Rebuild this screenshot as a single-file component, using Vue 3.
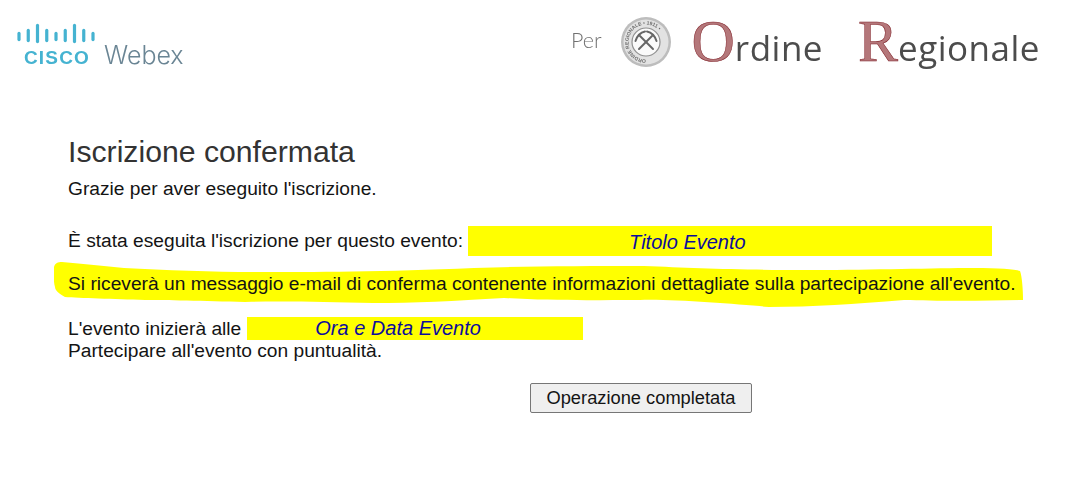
<template>
  <div class="page">
    <header class="top">
      <div class="cisco">
        <div class="cisco-mark">
          <svg class="bars" width="78" height="22" viewBox="0 0 78 22">
            <line
              v-for="(bar, index) in bars"
              :key="index"
              :x1="bar.x"
              :x2="bar.x"
              :y1="bar.top"
              :y2="bar.bottom"
            />
          </svg>
          <span class="cisco-word">CISCO</span>
        </div>
        <span class="webex">Webex</span>
      </div>

      <div class="partner">
        <span class="per">Per</span>
        <svg class="seal" width="52" height="52" viewBox="0 0 52 52">
          <circle cx="26" cy="26" r="25" fill="#bdbdbd" />
          <circle cx="26" cy="26" r="22.5" fill="#e2e2e2" />
          <circle cx="26" cy="26" r="14" fill="#fafafa" stroke="#8f8f8f" stroke-width="1.2" />
          <path id="sealRing" d="M26 43.5a17.5 17.5 0 1 1 .01 0" fill="none" />
          <text class="seal-text">
            <textPath href="#sealRing">ORDINE REGIONALE • 1911 •</textPath>
          </text>
          <g fill="none" stroke="#666" stroke-linecap="round">
            <path d="M19 33L32 20" stroke-width="2" />
            <path d="M33 33L20 20" stroke-width="2" />
            <path d="M27 15.5Q34 17 36.5 25" stroke-width="2" />
            <path d="M15.5 25Q18 17 25 15.5" stroke-width="2" />
          </g>
        </svg>
        <span class="org"><span class="cap">O</span>rdine</span>
        <span class="org"><span class="cap">R</span>egionale</span>
      </div>
    </header>

    <main class="content">
      <h1>Iscrizione confermata</h1>
      <p class="thanks">Grazie per aver eseguito l'iscrizione.</p>

      <div class="event-row">
        <span>È stata eseguita l'iscrizione per questo evento:</span>
        <span class="field field-title">Titolo Evento</span>
      </div>

      <div class="notice">
        <svg class="brush" width="970" height="50" viewBox="0 0 970 50">
          <path d="M0 7C1 3 4 2 8 2C30 4 50 6 70 8C110 10 160 12 200 12C260 12 330 12 420 8C480 6 530 6 590 6C640 8 680 10 760 10C820 10 880 8 920 8C945 8 960 9 966 11C968 16 969 30 969 40C930 41 880 41 850 40C800 44 760 47 715 47C680 44 620 39 586 40C540 40 500 41 450 38C400 41 360 43 319 43C270 42 230 41 191 42C150 41 110 40 91 40C60 39 25 38 11 37C5 34 1 30 1 27C-1 20 0 12 0 7Z" />
        </svg>
        <p>Si riceverà un messaggio e-mail di conferma contenente informazioni dettagliate sulla partecipazione all'evento.</p>
      </div>

      <div class="time-block">
        <div class="time-row">
          <span>L'evento inizierà alle</span>
          <span class="field field-time">Ora e Data Evento</span>
        </div>
        <p>Partecipare all'evento con puntualità.</p>
      </div>

      <div class="actions">
        <button type="button">Operazione completata</button>
      </div>
    </main>
  </div>
</template>

<script setup>
// Cisco bars: short, mid, tall, mirrored around the middle one
const sizes = {
  short: [10.4, 16.6],
  mid: [7.4, 17.6],
  tall: [2.4, 18.6]
}
const order = ['short', 'mid', 'tall', 'mid', 'short', 'mid', 'tall', 'mid', 'short']
const bars = order.map((name, i) => ({
  x: 2 + i * 9.25,
  top: sizes[name][0],
  bottom: sizes[name][1]
}))
</script>

<style>
html,
body {
  background: #fff;
}
</style>

<style scoped>
.page {
  width: 1065px;
  height: 484px;
  overflow: hidden;
  background: #fff;
  font-family: "Liberation Sans", Arial, sans-serif;
  color: #141414;
}

/* ---------- header ---------- */
.top {
  height: 90px;
  display: flex;
  justify-content: space-between;
  padding: 0 25px 0 17px;
  box-sizing: border-box;
}
.cisco {
  display: flex;
  align-items: flex-end;
  gap: 9px;
  height: 68px;
  filter: blur(0.5px);
}
.cisco-mark {
  display: flex;
  flex-direction: column;
  align-items: center;
}
.bars {
  margin-bottom: 3px;
}
.bars line {
  stroke: #45b3d1;
  stroke-width: 3.2;
  stroke-linecap: round;
}
.cisco-word {
  font-weight: 700;
  font-size: 19px;
  line-height: 20px;
  letter-spacing: 1.2px;
  padding-left: 2px;
  color: #45b3d1;
}
.webex {
  font-family: Inter, sans-serif;
  font-weight: 300;
  font-size: 25px;
  line-height: 26px;
  color: #6a8594;
}

.partner {
  display: flex;
  align-items: center;
  height: 84px;
  filter: blur(0.5px);
}
.per {
  font-family: Lato, sans-serif;
  font-weight: 300;
  font-size: 21.5px;
  color: #707070;
  margin: 0 18px 4px 0;
}
.seal {
  margin-right: 20px;
}
.seal-text {
  font-family: "Liberation Sans", sans-serif;
  font-size: 5px;
  font-weight: 700;
  fill: #6c6c6c;
}
.org {
  font-family: "Open Sans", sans-serif;
  font-size: 35px;
  letter-spacing: 0.5px;
  line-height: 60px;
  color: #4c4c4c;
  margin: 4px 35px 0 0;
}
.org:last-child {
  margin-right: 0;
}
.cap {
  font-family: "Liberation Serif", serif;
  font-size: 60px;
  letter-spacing: 0;
  color: #b4777a;
  -webkit-text-stroke: 0.5px #7f2027;
}

/* ---------- confirmation text ---------- */
.content {
  padding: 44px 0 0 68px;
  font-size: 19.2px;
  line-height: 22px;
}
h1 {
  margin: 0;
  font-size: 30.2px;
  font-weight: 400;
  line-height: 36px;
  color: #333;
}
p {
  margin: 0;
}
.thanks {
  margin-top: 8px;
}
.event-row {
  display: flex;
  align-items: center;
  gap: 5px;
  height: 30px;
  margin-top: 26px;
}
.field {
  display: block;
  background: #ff0;
  color: #0c0c9c;
  font-style: italic;
  font-size: 20px;
  box-sizing: border-box;
}
.field-title {
  width: 524px;
  height: 30px;
  line-height: 33px;
  padding-left: 161px;
}
.notice {
  position: relative;
  margin-top: 17px;
  height: 22px;
}
.notice p {
  position: relative;
  white-space: nowrap;
}
.brush {
  position: absolute;
  left: -14px;
  top: -13px;
  filter: blur(0.5px);
}
.brush path {
  fill: #ff0;
}
.time-block {
  margin-top: 22px;
}
.time-row {
  display: flex;
  align-items: center;
  gap: 6px;
  height: 23px;
}
.field-time {
  width: 336px;
  height: 23px;
  line-height: 23px;
  padding-left: 68px;
}
.actions {
  margin: 21px 0 0 462px;
}
button {
  width: 222px;
  height: 30px;
  padding: 0;
  font-family: "Liberation Sans", Arial, sans-serif;
  font-size: 18.3px;
  color: #141414;
  background: #efefef;
  border: 1px solid #767676;
  border-radius: 2px;
}
</style>
